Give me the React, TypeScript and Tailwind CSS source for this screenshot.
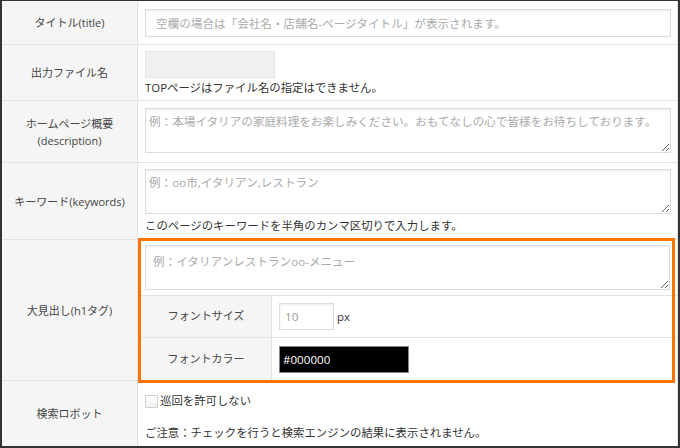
import React from "react";

const font = {
  fontFamily: '"Open Sans", "Noto Sans CJK JP", sans-serif',
};

function Label({ children }: { children: React.ReactNode }) {
  return (
    <div className="bg-[#f5f5f5] border-r border-[#e3e3e3] flex flex-col items-center justify-center text-center text-[11px] leading-[17px] text-[#444]">
      {children}
    </div>
  );
}

const baseCls =
  "block border border-[#dcdcdc] shadow-[inset_0_1px_2px_rgba(0,0,0,0.08)] bg-white text-[11.6px] text-[#333] placeholder:text-[#aaa] outline-none";

export default function App() {
  return (
    <div
      style={font}
      className="w-[680px] h-[448px] bg-white border-t border-l-2 border-r-2 border-b-2 border-[#333] flex flex-col"
    >
      <div className="flex flex-col h-full border-r border-[#e3e3e3]">
        {/* row 1 */}
        <div className="grid grid-cols-[136px_1fr] h-[44px] border-b border-[#e3e3e3]">
          <Label>タイトル(title)</Label>
          <div className="pl-[7px] pt-[8px]">
            <input
              className={`${baseCls} w-[526px] h-[28px] px-[10px]`}
              placeholder="空欄の場合は「会社名・店舗名-ページタイトル」が表示されます。"
            />
          </div>
        </div>
        {/* row 2 */}
        <div className="grid grid-cols-[136px_1fr] h-[56px] border-b border-[#e3e3e3]">
          <Label>出力ファイル名</Label>
          <div className="pl-[7px] pt-[6px]">
            <div className="w-[130px] h-[27px] bg-[#f0f0f0] border border-[#e6e6e6]" />
            <div className="mt-[2px] text-[11.4px] leading-[16px] text-[#333]">
              TOPページはファイル名の指定はできません。
            </div>
          </div>
        </div>
        {/* row 3 */}
        <div className="grid grid-cols-[136px_1fr] h-[62px] border-b border-[#e3e3e3]">
          <Label>
            <span>ホームページ概要</span>
            <span>(description)</span>
          </Label>
          <div className="pl-[7px] pt-[7px]">
            <textarea
              className={`${baseCls} w-[526px] h-[45px] px-[3px] pt-[5px] leading-[16px] resize`}
              placeholder="例：本場イタリアの家庭料理をお楽しみください。おもてなしの心で皆様をお待ちしております。"
            />
          </div>
        </div>
        {/* row 4 */}
        <div className="grid grid-cols-[136px_1fr] h-[77px] border-b border-[#e3e3e3]">
          <Label>キーワード(keywords)</Label>
          <div className="pl-[7px] pt-[6px]">
            <textarea
              className={`${baseCls} w-[526px] h-[45px] px-[3px] pt-[5px] leading-[16px] resize`}
              placeholder="例：oo市,イタリアン,レストラン"
            />
            <div className="mt-[4px] text-[11.4px] leading-[16px] text-[#333]">
              このページのキーワードを半角のカンマ区切りで入力します。
            </div>
          </div>
        </div>
        {/* row 5 */}
        <div className="grid grid-cols-[136px_1fr] h-[141px] border-b border-[#e3e3e3]">
          <Label>大見出し(h1タグ)</Label>
          <div className="relative flex flex-col">
            <div className="pl-[7px] pt-[5px] h-[56px] border-b border-[#e3e3e3]">
              <textarea
                className={`${baseCls} w-[525px] h-[45px] px-[7px] pt-[8px] leading-[16px] resize`}
                placeholder="例：イタリアンレストランoo-メニュー"
              />
            </div>
            <div className="grid grid-cols-[134px_1fr] h-[42px] border-b border-[#e3e3e3]">
              <div className="bg-[#f5f5f5] border-r border-[#e3e3e3] flex items-center justify-center text-[11px] text-[#444] pl-[3px]">
                フォントサイズ
              </div>
              <div className="flex items-center pl-[7px]">
                <input
                  className={`${baseCls} w-[55px] h-[27px] px-[5px] text-[#999]`}
                  defaultValue="10"
                />
                <span className="ml-[3px] text-[11.4px] text-[#333]">px</span>
              </div>
            </div>
            <div className="grid grid-cols-[134px_1fr] flex-1">
              <div className="bg-[#f5f5f5] border-r border-[#e3e3e3] flex items-center justify-center text-[11px] text-[#444] pl-[3px]">
                フォントカラー
              </div>
              <div className="flex items-center pl-[7px]">
                <input
                  className="block w-[130px] h-[27px] bg-black border border-[#888] text-white text-[11.6px] px-[3px] outline-none"
                  defaultValue="#000000"
                />
              </div>
            </div>
            <div className="absolute left-0 top-[-2px] w-[537px] h-[145px] border-[3px] border-[#ff7400] pointer-events-none" />
          </div>
        </div>
        {/* row 6 */}
        <div className="grid grid-cols-[136px_1fr] flex-1">
          <Label>検索ロボット</Label>
          <div className="pl-[7px] pt-[13px]">
            <label className="flex items-center gap-[2px] text-[11.4px] text-[#333] leading-[14px]">
              <span className="inline-block w-[13px] h-[13px] border border-[#cfcfcf] bg-gradient-to-b from-white to-[#f0f0f0] rounded-[1px]" />
              <span>巡回を許可しない</span>
            </label>
            <div className="mt-[17px] text-[11.4px] leading-[16px] text-[#333]">
              ご注意：チェックを行うと検索エンジンの結果に表示されません。
            </div>
          </div>
        </div>
      </div>
    </div>
  );
}
